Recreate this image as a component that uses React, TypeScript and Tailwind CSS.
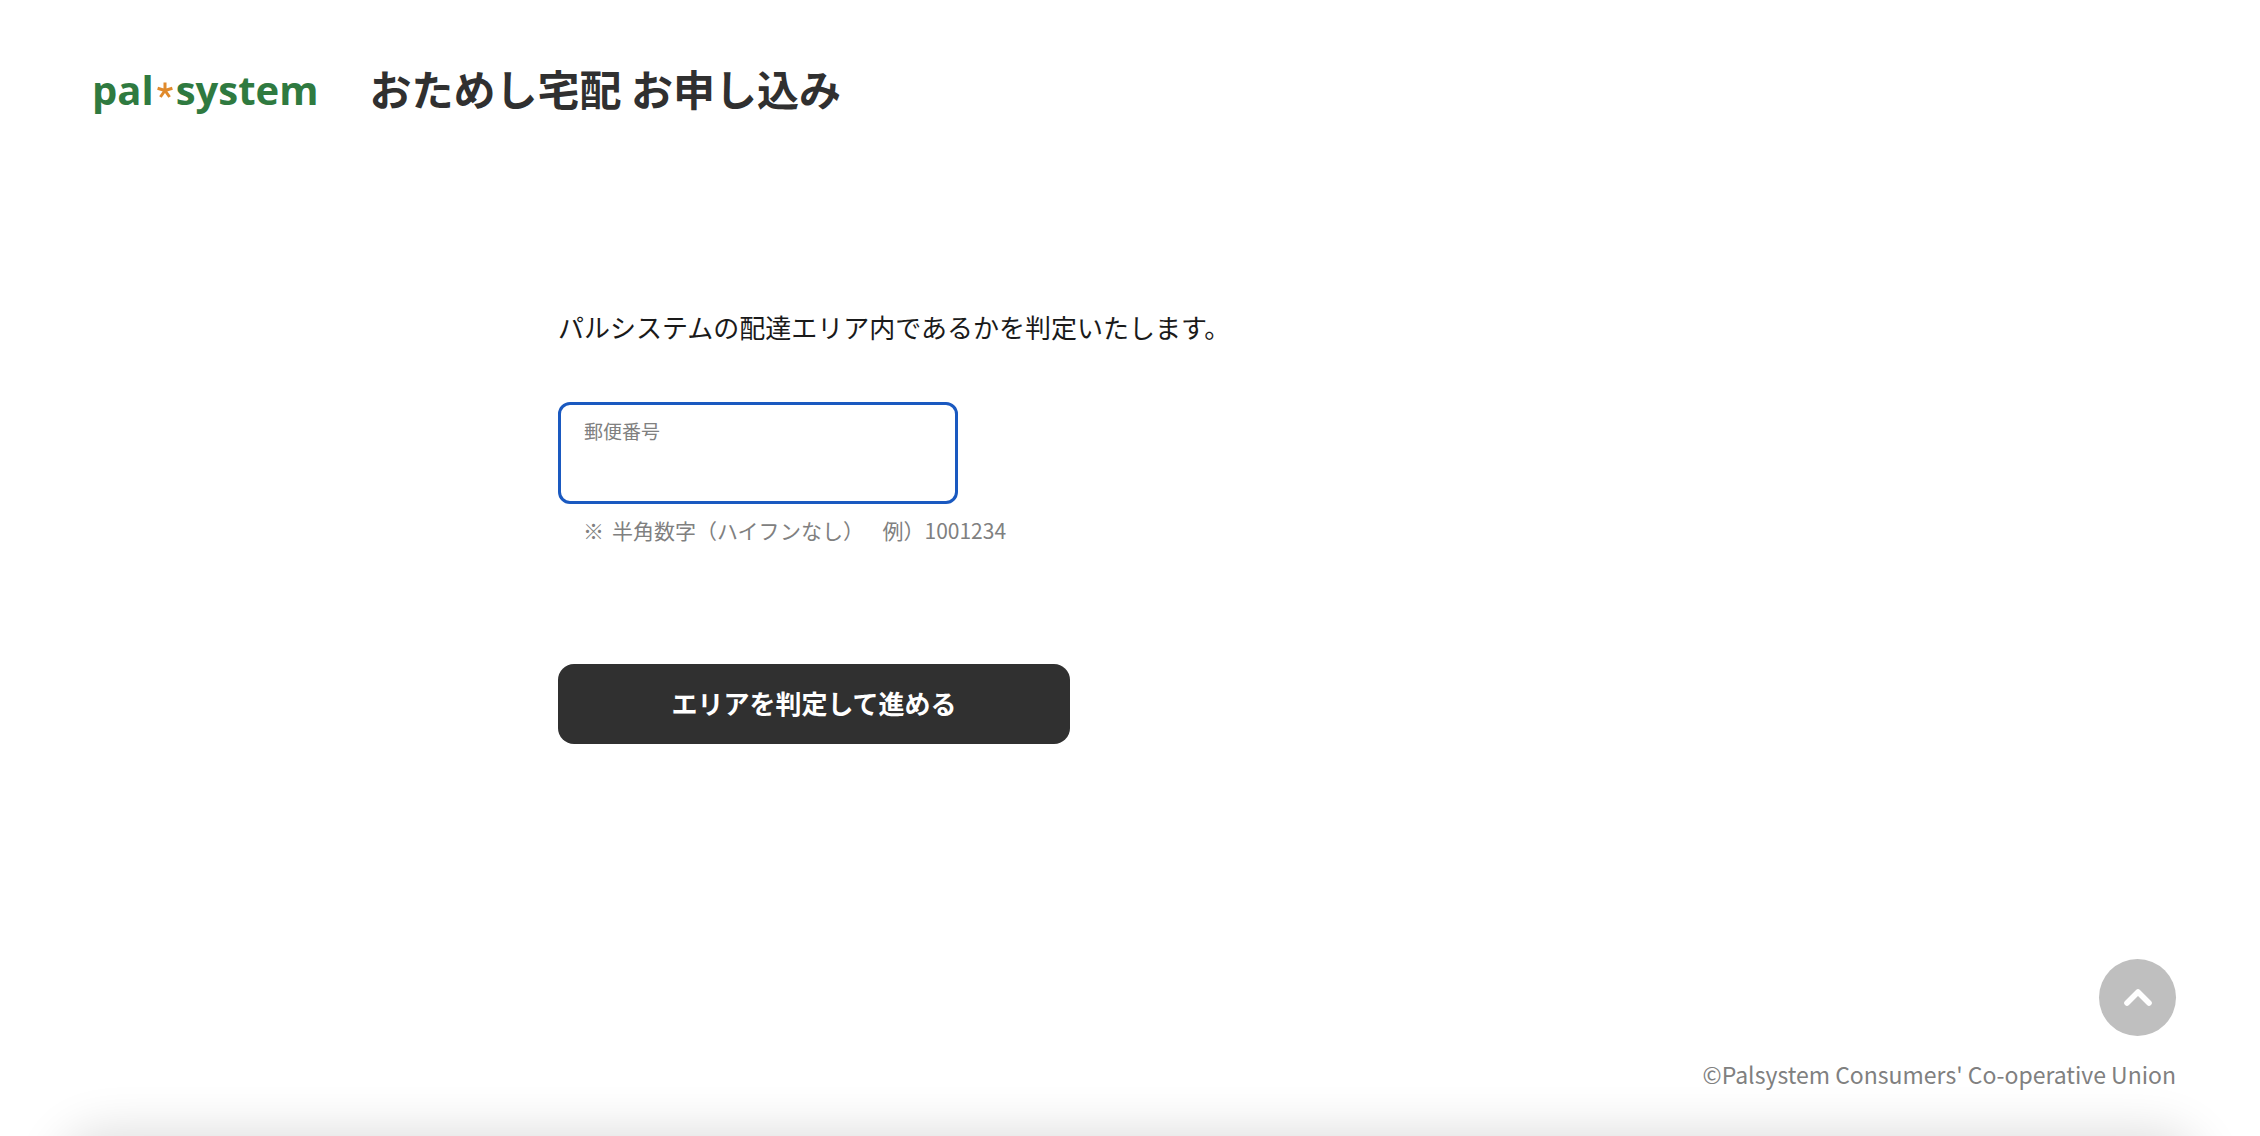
import { useState } from "react";

function Logo() {
  return (
    <a
      href="#"
      aria-label="pal system"
      className="flex items-center pt-1 font-['Open_Sans',sans-serif] text-[40px] leading-[56px] font-bold text-[#2f7a40]"
    >
      <span>pal</span>
      <svg viewBox="0 0 16 16" className="mx-[3px] h-4 w-4" aria-hidden="true">
        <path
          d="M8 8.5V0.5M8 8.5L0.6 6.2M8 8.5L15.4 6.2M8 8.5L3.4 15M8 8.5L12.6 15"
          fill="none"
          stroke="#e08a2c"
          strokeWidth="3"
        />
      </svg>
      <span>system</span>
    </a>
  );
}

function Header() {
  return (
    <header className="flex items-center gap-[51px] px-[92px] pt-[58px]">
      <Logo />
      <h1 className="text-[42px] leading-[60px] font-bold">おためし宅配 お申し込み</h1>
    </header>
  );
}

function AreaForm() {
  const [zip, setZip] = useState("");

  return (
    <form onSubmit={(e) => e.preventDefault()} className="flex flex-col items-start">
      <div className="flex h-[102px] w-[400px] flex-col rounded-xl border-3 border-[#1a59c0] px-[23px] pt-3">
        <label htmlFor="zip" className="text-[19px] leading-7 text-[#808080]">
          郵便番号
        </label>
        <input
          id="zip"
          type="text"
          inputMode="numeric"
          maxLength={7}
          value={zip}
          onChange={(e) => setZip(e.target.value)}
          aria-describedby="zip-hint"
          className="w-full text-[26px] leading-10 outline-none"
        />
      </div>
      <p id="zip-hint" className="mt-[10px] flex gap-2 pl-[25px] text-[21px] leading-8 text-[#808080]">
        <span>※</span>
        <span>半角数字（ハイフンなし）　</span>
        <span>例）1001234</span>
      </p>
      <button
        type="submit"
        className="mt-[118px] h-20 w-[512px] rounded-2xl bg-[#303030] pb-1 text-[26px] font-bold text-white"
      >
        エリアを判定して進める
      </button>
    </form>
  );
}

function Footer() {
  return (
    <footer className="mt-auto flex flex-col items-end gap-5 px-[84px] pb-11">
      <button
        type="button"
        aria-label="ページの先頭へ"
        onClick={() => window.scrollTo({ top: 0, behavior: "smooth" })}
        className="flex h-[77px] w-[77px] items-center justify-center rounded-full bg-[#bfbfbf]"
      >
        <svg viewBox="0 0 28 18" className="h-[18px] w-7" aria-hidden="true">
          <path
            d="M3 14L14 3L25 14"
            fill="none"
            stroke="#fff"
            strokeWidth="5.6"
            strokeLinecap="round"
            strokeLinejoin="round"
          />
        </svg>
      </button>
      <small className="text-[23px] leading-9 text-[#808080]">©Palsystem Consumers' Co-operative Union</small>
    </footer>
  );
}

export default function App() {
  return (
    <div className="flex min-h-screen flex-col bg-white font-['Noto_Sans_CJK_JP',sans-serif] text-[#303030]">
      <Header />
      <main className="mx-auto w-full max-w-[1144px] pt-[188px]">
        <p className="mb-[54px] text-[26px] leading-[42px] text-[#1a1a1a]">
          パルシステムの配達エリア内であるかを判定いたします。
        </p>
        <AreaForm />
      </main>
      <Footer />
      {/* soft shadow along the bottom edge of the window */}
      <div className="pointer-events-none fixed inset-x-16 top-full h-32 rounded-[40px] shadow-[0_0_50px_4px_rgba(0,0,0,0.14)]" />
    </div>
  );
}
